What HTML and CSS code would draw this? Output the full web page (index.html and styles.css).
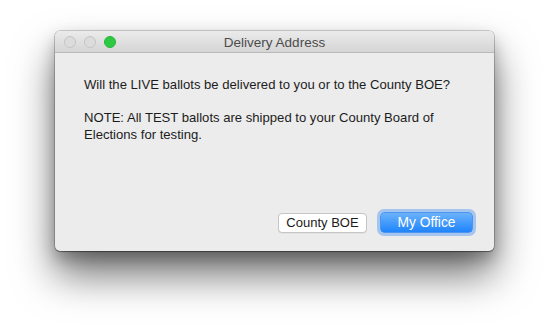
FILE: index.html
```html
<!DOCTYPE html>
<html>
<head>
<meta charset="utf-8">
<link rel="stylesheet" href="styles.css">
</head>
<body>
<div class="window">
  <div class="titlebar">
    <div class="lights">
      <span class="light"></span>
      <span class="light"></span>
      <span class="light green"></span>
    </div>
    <div class="title">Delivery Address</div>
  </div>
  <div class="content">
    <p class="msg">Will the LIVE ballots be delivered to you or to the County BOE?</p>
    <p class="msg">NOTE: All TEST ballots are shipped to your County Board of Elections for testing.</p>
    <div class="buttons">
      <button class="btn">County BOE</button>
      <button class="btn primary">My Office</button>
    </div>
  </div>
</div>
</body>
</html>
```

FILE: styles.css
```css
html, body {
  margin: 0;
  padding: 0;
  background: #ffffff;
}
body {
  box-sizing: border-box;
  height: 331px;
  padding: 31px 0 0 55px;
  font-family: "Liberation Sans", Arial, sans-serif;
  overflow: hidden;
}
.window {
  width: 439px;
  height: 220px;
  border-radius: 5px;
  background: #ececec;
  box-shadow: 0 0 0 0.5px rgba(0,0,0,0.35), 0 1px 1px rgba(0,0,0,0.3), 0 24px 40px rgba(0,0,0,0.55), 0 8px 16px rgba(0,0,0,0.25);
  display: flex;
  flex-direction: column;
  overflow: hidden;
}
.titlebar {
  height: 22px;
  flex: none;
  background: linear-gradient(#ebebeb, #d5d5d5);
  border-bottom: 1px solid #b9b9b9;
  position: relative;
  display: flex;
  align-items: center;
  justify-content: center;
  box-sizing: border-box;
}
.lights {
  position: absolute;
  left: 9px;
  top: 5px;
  display: flex;
  gap: 8px;
}
.light {
  width: 12px;
  height: 12px;
  box-sizing: border-box;
  border-radius: 50%;
  background: #dcdcdc;
  border: 1px solid #c4c4c4;
}
.light.green {
  background: #2dc943;
  border-color: #26b63c;
}
.title {
  font-size: 13.5px;
  color: #4c4c4c;
  padding-top: 1px;
}
.content {
  flex: 1;
  display: flex;
  flex-direction: column;
  padding: 23px 21px 18px 29px;
}
.msg {
  margin: 0 0 16px 0;
  font-size: 13.1px;
  line-height: 17px;
  color: #1c1c1c;
}
.buttons {
  margin-top: auto;
  display: flex;
  justify-content: flex-end;
  align-items: center;
  gap: 13px;
}
.btn {
  font-family: "Liberation Sans", Arial, sans-serif;
  font-size: 13px;
  height: 20px;
  padding: 0;
  width: 89px;
  border-radius: 4px;
  background: #ffffff;
  border: 1px solid #c5c5c5;
  color: #1a1a1a;
  box-shadow: 0 0.5px 0 rgba(0,0,0,0.08);
}
.btn.primary {
  width: 93px;
  height: 21px;
  font-size: 13.8px;
  border: 1px solid #4a96f0;
  background: linear-gradient(#6bb2fb, #1f84fb);
  color: #ffffff;
  box-shadow: 0 0 0 3px rgba(110,165,240,0.55);
}
```
